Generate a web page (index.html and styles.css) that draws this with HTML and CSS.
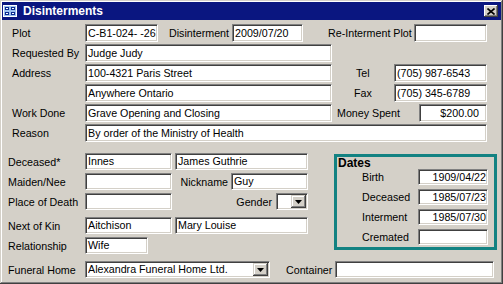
FILE: index.html
```html
<!DOCTYPE html>
<html>
<head>
<meta charset="utf-8">
<title>Disinterments</title>
<link rel="stylesheet" href="styles.css">
</head>
<body>
<div class="window">
  <div class="titlebar">
    <svg class="title-icon" viewBox="0 0 14 12" width="14" height="12">
      <rect x="0.5" y="0.5" width="13" height="11" fill="#9cc0f0" stroke="#ffffff"/>
      <rect x="2.5" y="2.5" width="3" height="2" fill="#ffffff" stroke="#0a2a90"/>
      <rect x="8.5" y="2.5" width="3" height="2" fill="#ffffff" stroke="#0a2a90"/>
      <rect x="2.5" y="7.5" width="3" height="2" fill="#ffffff" stroke="#0a2a90"/>
      <rect x="8.5" y="7.5" width="3" height="2" fill="#ffffff" stroke="#0a2a90"/>
    </svg>
    <span class="title">Disinterments</span>
    <div class="close-btn">
      <svg viewBox="0 0 8 7" width="8" height="7"><path d="M0.5 0.5L7.5 6.5M7.5 0.5L0.5 6.5" stroke="#000" stroke-width="1.6"/></svg>
    </div>
  </div>

  <div class="form">
    <div class="top">
      <div class="row">
        <span class="lbl lbl-top">Plot</span>
        <div class="tb w-plot">C-B1-024- -26</div>
        <span class="lbl lbl-disint">Disinterment</span>
        <div class="tb w-disint">2009/07/20</div>
        <span class="lbl lbl-reint">Re-Interment Plot</span>
        <div class="tb w-reint"></div>
      </div>
      <div class="row">
        <span class="lbl lbl-top">Requested By</span>
        <div class="tb w-wide">Judge Judy</div>
      </div>
      <div class="row">
        <span class="lbl lbl-top">Address</span>
        <div class="tb w-wide">100-4321 Paris Street</div>
        <span class="lbl lbl-tel">Tel</span>
        <div class="tb w-phone">(705) 987-6543</div>
      </div>
      <div class="row">
        <span class="lbl lbl-top"></span>
        <div class="tb w-wide">Anywhere Ontario</div>
        <span class="lbl lbl-fax">Fax</span>
        <div class="tb w-phone">(705) 345-6789</div>
      </div>
      <div class="row">
        <span class="lbl lbl-top">Work Done</span>
        <div class="tb w-wide">Grave Opening and Closing</div>
        <span class="lbl lbl-money">Money Spent</span>
        <div class="tb w-money num">$200.00</div>
      </div>
      <div class="row">
        <span class="lbl lbl-top">Reason</span>
        <div class="tb w-reason">By order of the Ministry of Health</div>
      </div>
    </div>

    <div class="lower">
      <div class="left-col">
        <div class="row row-low">
          <span class="lbl lbl-low">Deceased*</span>
          <div class="tb w-last">Innes</div>
          <div class="tb w-first">James Guthrie</div>
        </div>
        <div class="row row-low">
          <span class="lbl lbl-low">Maiden/Nee</span>
          <div class="tb w-last"></div>
          <span class="lbl lbl-nick">Nickname</span>
          <div class="tb w-nick">Guy</div>
        </div>
        <div class="row row-low">
          <span class="lbl lbl-low">Place of Death</span>
          <div class="tb w-last"></div>
          <span class="lbl lbl-gender">Gender</span>
          <div class="tb combo w-gender">
            <span class="combo-text"></span>
            <span class="drop"><svg viewBox="0 0 7 4" width="7" height="4"><path d="M0 0H7L3.5 4Z" fill="#000"/></svg></span>
          </div>
        </div>
        <div class="row row-low row-kin">
          <span class="lbl lbl-low">Next of Kin</span>
          <div class="tb w-last">Aitchison</div>
          <div class="tb w-first">Mary Louise</div>
        </div>
        <div class="row row-low">
          <span class="lbl lbl-low">Relationship</span>
          <div class="tb w-rel">Wife</div>
        </div>
      </div>

      <div class="dates">
        <div class="dates-title">Dates</div>
        <div class="dates-rows">
          <div class="row date-row">
            <span class="lbl lbl-date">Birth</span>
            <div class="tb w-date num">1909/04/22</div>
          </div>
          <div class="row date-row">
            <span class="lbl lbl-date">Deceased</span>
            <div class="tb w-date num">1985/07/23</div>
          </div>
          <div class="row date-row">
            <span class="lbl lbl-date">Interment</span>
            <div class="tb w-date num">1985/07/30</div>
          </div>
          <div class="row date-row">
            <span class="lbl lbl-date">Cremated</span>
            <div class="tb w-date num"></div>
          </div>
        </div>
      </div>
    </div>

    <div class="row row-low row-funeral">
      <span class="lbl lbl-low">Funeral Home</span>
      <div class="tb combo w-funeral">
        <span class="combo-text">Alexandra Funeral Home Ltd.</span>
        <span class="drop"><svg viewBox="0 0 7 4" width="7" height="4"><path d="M0 0H7L3.5 4Z" fill="#000"/></svg></span>
      </div>
      <span class="lbl lbl-container">Container</span>
      <div class="tb w-container"></div>
    </div>
  </div>
</div>
</body>
</html>
```

FILE: styles.css
```css
* {
  box-sizing: border-box;
}

html,
body {
  margin: 0;
  padding: 0;
}

body {
  width: 503px;
  height: 284px;
  overflow: hidden;
  background: #d4d0c8;
  font-family: "Liberation Sans", Arial, sans-serif;
  font-size: 10.7px;
  color: #000;
}

.window {
  width: 503px;
  height: 284px;
  padding: 2px 2px 4px 2px;
  background: #d4d0c8;
  display: flex;
  flex-direction: column;
  box-shadow: inset -1px -1px 0 #404040, inset 1px 1px 0 #d4d0c8,
    inset -2px -2px 0 #808080, inset 2px 2px 0 #ffffff;
}

/* title bar */
.titlebar {
  height: 18px;
  flex: none;
  background: #0a1680;
  color: #fff;
  display: flex;
  align-items: center;
  padding-left: 1px;
}

.title-icon {
  flex: none;
  margin-right: 6px;
}

.title {
  flex: 1;
  font-weight: bold;
  font-size: 12px;
  line-height: 14px;
}

.close-btn {
  flex: none;
  width: 14px;
  height: 12px;
  margin-right: 3px;
  background: #d4d0c8;
  display: flex;
  align-items: center;
  justify-content: center;
  box-shadow: inset -1px -1px 0 #404040, inset 1px 1px 0 #ffffff,
    inset -2px -2px 0 #808080;
}

/* form */
.form {
  flex: 1;
  display: flex;
  flex-direction: column;
}

.row {
  display: flex;
  align-items: center;
  height: 18px;
  flex: none;
}

.lbl {
  flex: none;
  white-space: nowrap;
  line-height: 14px;
}

.tb {
  flex: none;
  height: 100%;
  background: #fff;
  border-style: solid;
  border-width: 1px;
  border-color: #808080 #ffffff #ffffff #808080;
  box-shadow: inset 1px 1px 0 #404040, inset -1px -1px 0 #d4d0c8;
  padding: 0 1px 0 2px;
  display: flex;
  align-items: center;
  white-space: nowrap;
  overflow: hidden;
  line-height: 13px;
}

.tb.num {
  justify-content: flex-end;
}

/* top block */
.top {
  margin-top: 4px;
  display: flex;
  flex-direction: column;
  gap: 2px;
}

.lbl-top {
  margin-left: 10px;
  width: 73px;
}

.w-plot { width: 73px; }

.lbl-disint {
  margin-left: 11px;
  width: 63px;
}

.w-disint { width: 71px; }

.lbl-reint {
  margin-left: 25px;
  width: 86px;
}

.w-reint { width: 73px; }

.w-wide { width: 247px; }

.lbl-tel {
  margin-left: 24px;
  width: 38px;
}

.lbl-fax {
  margin-left: 22px;
  width: 40px;
}

.w-phone { width: 93px; }

.lbl-money {
  margin-left: 5px;
  width: 82px;
}

.w-money {
  width: 68px;
  padding-right: 7px;
}

.w-reason { width: 402px; }

/* lower block */
.lower {
  display: flex;
  align-items: flex-start;
  margin-top: 11px;
}

.left-col {
  display: flex;
  flex-direction: column;
  gap: 3px;
}

.row-low {
  height: 17px;
}

.row-kin {
  margin-top: 4px;
}

.lbl-low {
  margin-left: 6px;
  width: 77px;
}

.w-last { width: 87px; }

.w-first {
  width: 133px;
  margin-left: 3px;
}

.lbl-nick {
  width: 59px;
  text-align: right;
  padding-right: 3px;
}

.w-nick { width: 77px; }

.lbl-gender {
  width: 104px;
  text-align: right;
  padding-right: 4px;
}

.w-gender { width: 32px; }

.w-rel { width: 63px; }

.combo {
  padding-right: 1px;
}

.combo-text {
  flex: 1;
  overflow: hidden;
}

.drop {
  flex: none;
  width: 15px;
  height: 13px;
  background: #d4d0c8;
  display: flex;
  align-items: center;
  justify-content: center;
  box-shadow: inset -1px -1px 0 #404040, inset 1px 1px 0 #d4d0c8,
    inset -2px -2px 0 #808080, inset 2px 2px 0 #ffffff;
}

/* dates group */
.dates {
  margin-left: 26px;
  margin-top: 1px;
  width: 163px;
  height: 96px;
  border: 3px solid #128282;
  padding-left: 1px;
}

.dates-title {
  font-weight: bold;
  font-size: 12px;
  line-height: 12px;
  height: 12px;
}

.dates-rows {
  display: flex;
  flex-direction: column;
  gap: 4px;
}

.date-row {
  height: 16px;
}

.lbl-date {
  margin-left: 24px;
  width: 56px;
}

.w-date { width: 70px; }

/* funeral row */
.row-funeral {
  margin-top: 7px;
}

.w-funeral { width: 185px; }

.lbl-container {
  margin-left: 16px;
  width: 49px;
}

.w-container { width: 159px; }
```
